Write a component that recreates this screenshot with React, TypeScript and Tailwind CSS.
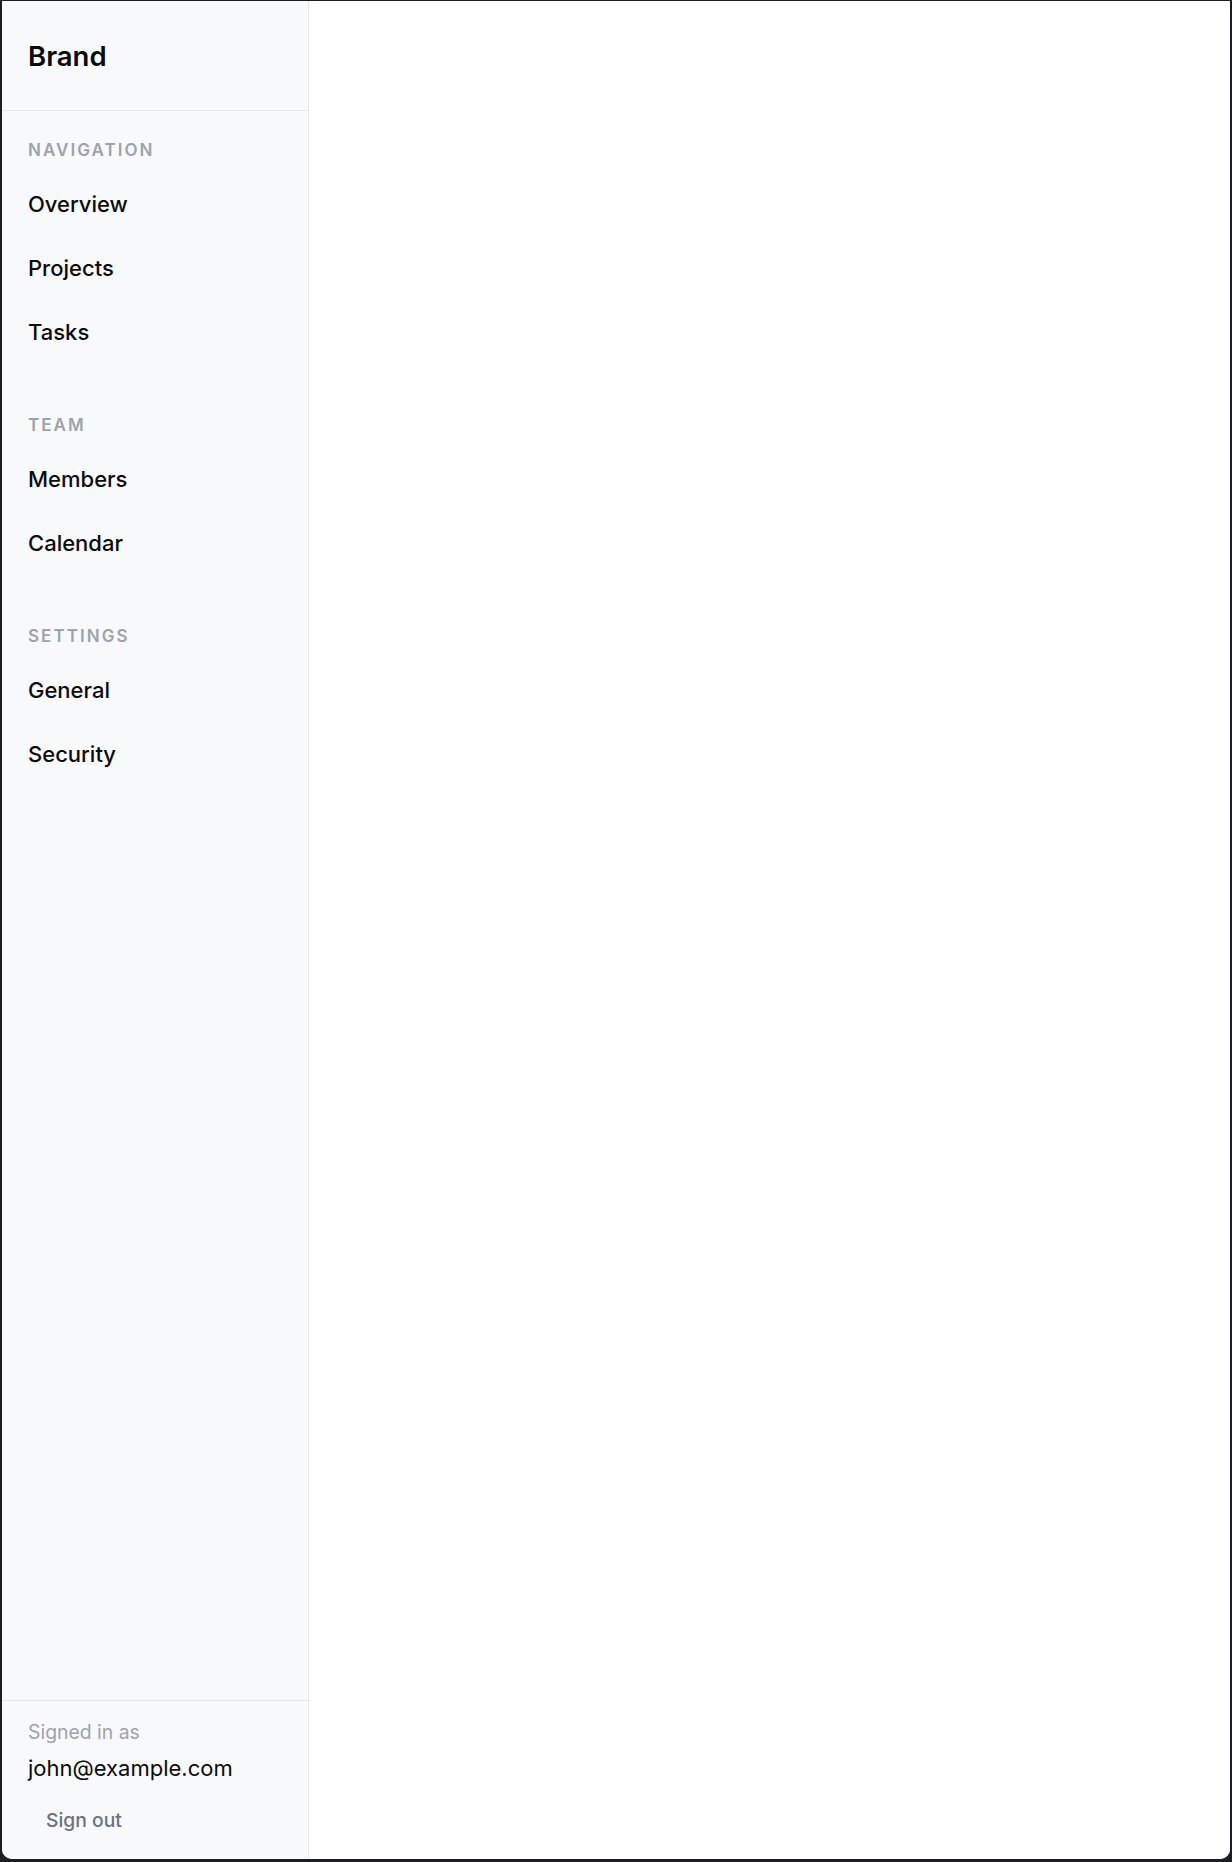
import React from "react";

const sections = [
  { title: "Navigation", items: ["Overview", "Projects", "Tasks"] },
  { title: "Team", items: ["Members", "Calendar"] },
  { title: "Settings", items: ["General", "Security"] },
];

const App = () => {
  return (
    <div
      className="h-[1862px] w-[1232px] bg-[#1c1d22] pt-px pl-[2px] pr-[2px] pb-[3px]"
      style={{ fontFamily: "Inter, 'Noto Sans', sans-serif" }}
    >
      <div className="flex h-full overflow-hidden rounded-b-[10px] bg-white">
        <aside className="flex w-[307px] shrink-0 flex-col border-r border-[#e5e7eb] bg-[#f8f9fb]">
          <div className="flex h-[110px] shrink-0 items-center border-b border-[#e5e7eb] px-[26px] pt-[2px]">
            <h1 className="text-[27.5px] font-semibold text-[#0b0b0c]">Brand</h1>
          </div>

          <nav className="flex flex-1 flex-col gap-[50px] pt-[28px]">
            {sections.map((section) => (
              <div key={section.title}>
                <p className="mb-[11px] px-[26px] text-[17px] leading-[22px] font-semibold uppercase tracking-[0.12em] text-[#9ca3af]">
                  {section.title}
                </p>
                <ul>
                  {section.items.map((item) => (
                    <li key={item}>
                      <a className="flex h-[64px] items-center px-[26px] text-[22px] font-medium text-[#0b0b0c]">
                        {item}
                      </a>
                    </li>
                  ))}
                </ul>
              </div>
            ))}
          </nav>

          <div className="shrink-0 border-t border-[#e5e7eb] px-[26px] pt-[18px] pb-[18px]">
            <p className="text-[19.4px] leading-[26px] text-[#9ca3af]">Signed in as</p>
            <p className="mt-[8px] text-[22px] leading-[30px] text-[#0b0b0c]">john@example.com</p>
            <button className="mt-[16px] px-[18px] py-[8px] text-[19.3px] leading-[26px] font-medium text-[#6b7280]">
              Sign out
            </button>
          </div>
        </aside>

        <main className="flex-1 bg-white" />
      </div>
    </div>
  );
};

export default App;
